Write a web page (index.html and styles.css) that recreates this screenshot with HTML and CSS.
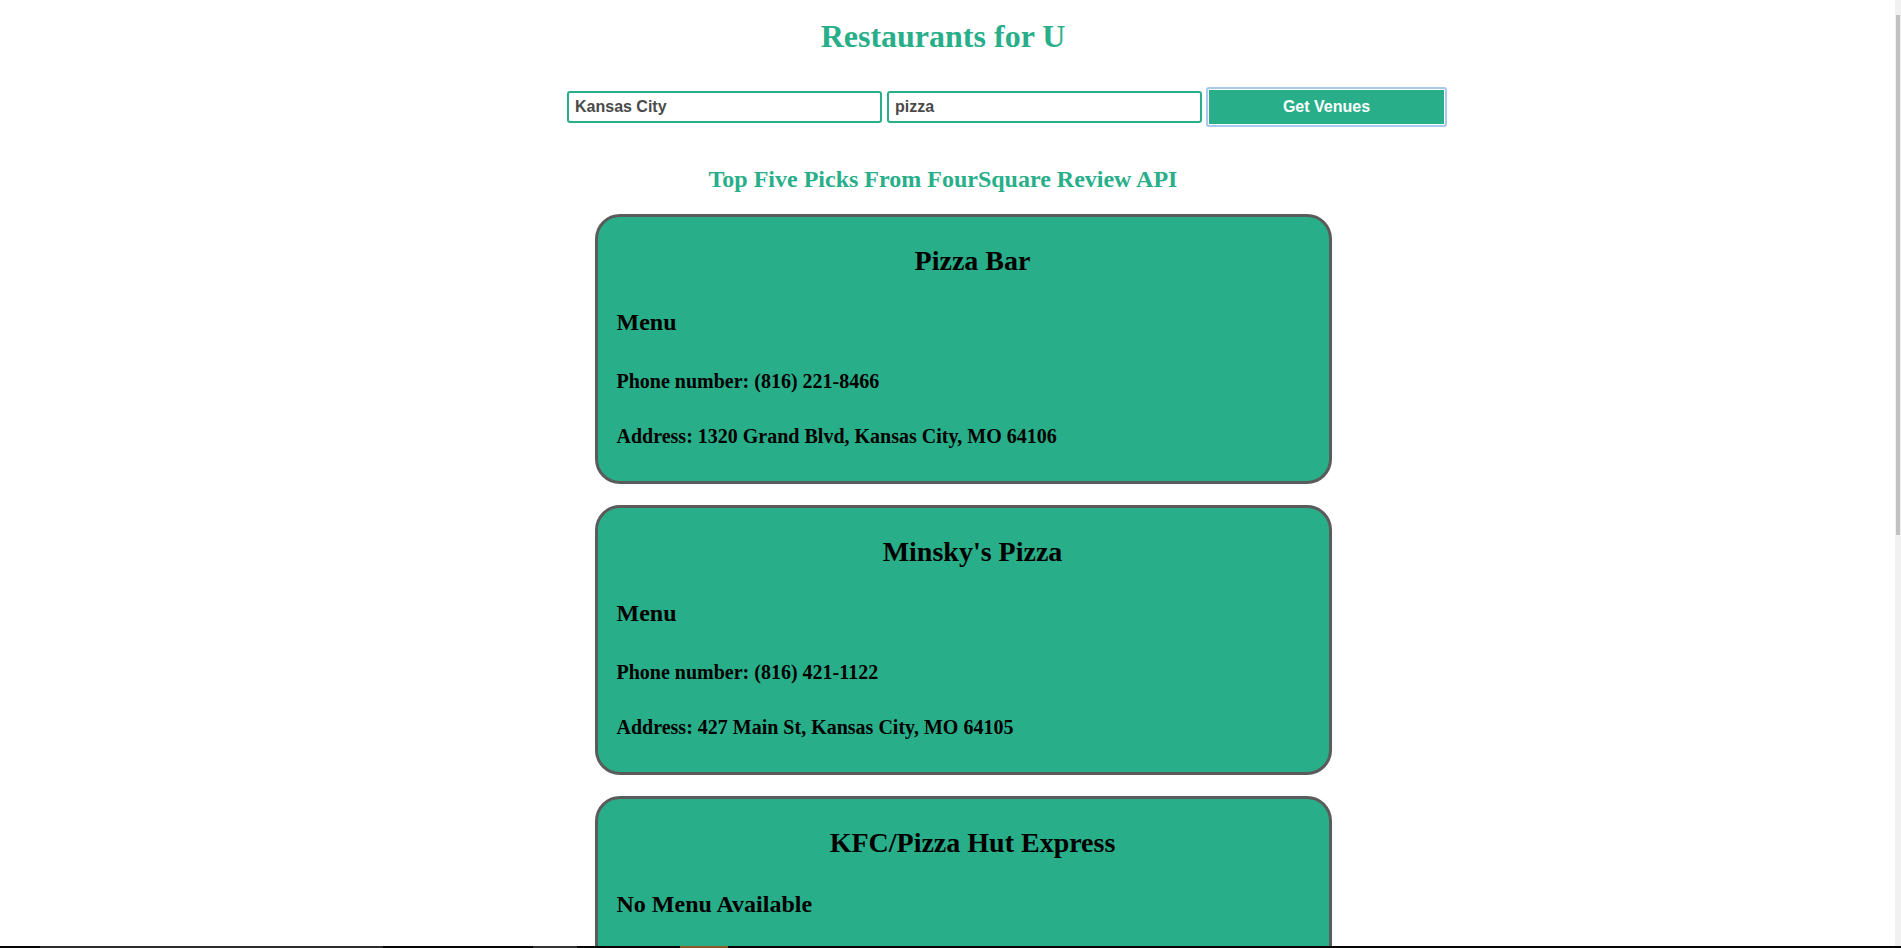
FILE: index.html
```html
<!DOCTYPE html>
<html lang="en">
<head>
<meta charset="utf-8">
<title>Restaurants for U</title>
<link rel="stylesheet" href="styles.css">
</head>
<body>
  <h1 class="site-title">Restaurants for U</h1>
  <form class="search">
    <input class="field" type="text" value="Kansas City">
    <input class="field" type="text" value="pizza">
    <button class="go" type="button">Get Venues</button>
  </form>
  <h2 class="picks-title">Top Five Picks From FourSquare Review API</h2>
  <ul class="venues">
    <li class="venue">
      <h3 class="venue-name">Pizza Bar</h3>
      <h4 class="venue-menu">Menu</h4>
      <p class="venue-line">Phone number: (816) 221-8466</p>
      <p class="venue-line">Address: 1320 Grand Blvd, Kansas City, MO 64106</p>
    </li>
    <li class="venue">
      <h3 class="venue-name">Minsky's Pizza</h3>
      <h4 class="venue-menu">Menu</h4>
      <p class="venue-line">Phone number: (816) 421-1122</p>
      <p class="venue-line">Address: 427 Main St, Kansas City, MO 64105</p>
    </li>
    <li class="venue">
      <h3 class="venue-name">KFC/Pizza Hut Express</h3>
      <h4 class="venue-menu">No Menu Available</h4>
      <p class="venue-line">&nbsp;</p>
      <p class="venue-line">&nbsp;</p>
    </li>
    <li class="venue">
      <h3 class="venue-name">&nbsp;</h3>
      <h4 class="venue-menu">&nbsp;</h4>
      <p class="venue-line">&nbsp;</p>
      <p class="venue-line">&nbsp;</p>
    </li>
    <li class="venue">
      <h3 class="venue-name">&nbsp;</h3>
      <h4 class="venue-menu">&nbsp;</h4>
      <p class="venue-line">&nbsp;</p>
      <p class="venue-line">&nbsp;</p>
    </li>
  </ul>
  <div class="scrollbar"><div class="scrollbar-thumb"></div></div>
  <div class="taskbar-edge">
    <span class="seg seg-a"></span>
    <span class="seg seg-b"></span>
    <span class="seg seg-c"></span>
    <span class="seg seg-d"></span>
    <span class="seg seg-e"></span>
    <span class="seg seg-f"></span>
  </div>
</body>
</html>
```
FILE: styles.css
```css
html, body {
  background: #ffffff;
}
body {
  margin: 8px 23px 8px 8px;
  font-family: "Liberation Serif", "Times New Roman", serif;
  color: #000;
}
.site-title {
  margin: 10px 0 0;
  font-size: 32px;
  line-height: 37px;
  font-weight: bold;
  color: #28af8a;
  text-align: center;
}
.search {
  display: flex;
  align-items: center;
  justify-content: center;
  gap: 4px;
  margin: 32px 0 0;
  padding-left: 128px;
  height: 40px;
}
.field {
  box-sizing: border-box;
  width: 315px;
  height: 32px;
  margin: 0;
  padding: 0 6px;
  border: 2px solid #28af8a;
  border-radius: 3px;
  background: #fff;
  font-family: "Liberation Sans", Arial, sans-serif;
  font-weight: bold;
  font-size: 16px;
  color: #4a4a4a;
  outline: none;
}
.field + .field {
  margin-left: 1px;
}
.go {
  box-sizing: border-box;
  width: 237px;
  height: 36px;
  margin: 0 2px;
  border: 1px solid #fff;
  border-radius: 1px;
  background: #28af8a;
  box-shadow: 0 0 0 2px #a9c9ee;
  font-family: "Liberation Sans", Arial, sans-serif;
  font-weight: bold;
  font-size: 16px;
  color: #fff;
  cursor: pointer;
}
.picks-title {
  margin: 38px 0 0;
  font-size: 24px;
  line-height: 28px;
  font-weight: bold;
  color: #28af8a;
  text-align: center;
}
.venues {
  list-style: none;
  margin: 21px 0 0;
  padding: 0 0 0 40px;
}
.venue {
  box-sizing: border-box;
  width: 40%;
  min-width: 737px;
  margin: 0 auto 21px;
  padding: 28px 0 33px 19px;
  background: #28af8a;
  border: 3px solid #5b5b5b;
  border-radius: 25px;
}
.venue-name {
  margin: 0 0 31px;
  font-size: 28px;
  line-height: 32px;
  font-weight: bold;
  text-align: center;
}
.venue-menu {
  margin: 0 0 34px;
  font-size: 24px;
  line-height: 28px;
  font-weight: bold;
}
.venue-line {
  margin: 0 0 32px;
  font-size: 20px;
  line-height: 23px;
  font-weight: bold;
}
.venue-line:last-child {
  margin-bottom: 0;
}
.scrollbar {
  position: fixed;
  top: 0;
  right: 0;
  bottom: 0;
  width: 6px;
  background: #f1f1f1;
}
.scrollbar-thumb {
  margin: 15px 1px 0;
  height: 520px;
  background: #c1c1c1;
}
.taskbar-edge {
  position: fixed;
  left: 0;
  right: 0;
  bottom: 0;
  height: 2px;
  background: #050505;
  display: flex;
}
.seg {
  display: block;
  height: 2px;
}
.seg-a { width: 40px; background: #050505; }
.seg-b { width: 343px; background: #2d2d2d; }
.seg-c { width: 150px; background: #050505; }
.seg-d { width: 44px; background: #333; }
.seg-e { width: 103px; background: #050505; }
.seg-f { width: 48px; background: #8a5a2a; }
```
